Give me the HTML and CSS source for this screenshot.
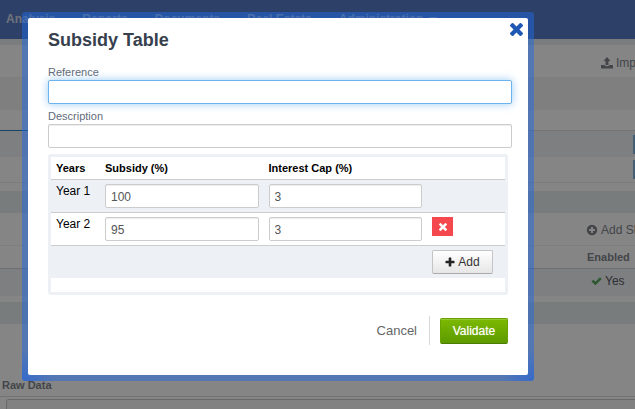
FILE: index.html
```html
<!DOCTYPE html>
<html lang="en">
<head>
    <meta charset="UTF-8">
    <meta name="viewport" content="width=device-width, initial-scale=1.0">
    <title>Subsidy Table</title>
    <link rel="stylesheet" href="styles.css">
</head>
<body>

    <div class="page">
        <nav class="navbar">
            <a href="#">Analysis</a>
            <a href="#">Reports</a>
            <a href="#">Documents</a>
            <a href="#">Real Estate</a>
            <a href="#">Administration <span class="caret"></span></a>
        </nav>

        <div class="toolbar">
            <a href="#" class="tool tool-import">
                <svg class="icon" viewBox="0 0 12 12"><path d="M6 0 9.500 4H7.500V8H4.500V4H2.500zM0 8H3.500Q4 9.200 6 9.200T8.500 8H12V11.500H0z"/></svg>
                Imp
            </a>
        </div>
        <div class="band band-filter"></div>
        <div class="tabs"><span class="tab-active"></span></div>
        <div class="row shaded"><button type="button" class="row-btn" aria-label="Edit"></button></div>
        <div class="row"><button type="button" class="row-btn" aria-label="Edit"></button></div>

        <div class="band"></div>
        <div class="actions">
            <a href="#" class="tool tool-add">
                <svg class="icon" viewBox="0 0 12 12"><path fill-rule="evenodd" d="M6 0.800A5.200 5.200 0 1 1 6 11.200 5.200 5.200 0 1 1 6 0.800zM5 3V5H3V7H5V9H7V7H9V5H7V3z"/></svg>
                Add Sh
            </a>
        </div>
        <div class="list-head"><span class="enabled">Enabled</span></div>
        <div class="list-row shaded">
            <span class="enabled enabled-yes">
                <svg class="icon check" viewBox="0 0 12 12"><path d="M0.500 6.500 2.500 4.500 4.800 6.700 9.700 1.800 11.700 3.800 4.800 10.700z"/></svg>
                Yes
            </span>
        </div>

        <div class="band"></div>
        <div class="raw">
            <label class="raw-title" for="raw">Raw Data</label>
            <textarea id="raw" class="raw-text"></textarea>
        </div>
    </div>

    <div class="backdrop">
        <div class="modal-frame">
            <form class="modal" role="dialog" aria-labelledby="title">
                <button type="button" class="close" aria-label="Close">
                    <svg viewBox="110 366 1188 1188"><path d="M1298 1322q0 40-28 68l-136 136q-28 28-68 28t-68-28l-294-294-294 294q-28 28-68 28t-68-28l-136-136q-28-28-28-68t28-68l294-294-294-294q-28-28-28-68t28-68l136-136q28-28 68-28t68 28l294 294 294-294q28-28 68-28t68 28l136 136q28 28 28 68t-28 68l-294 294 294 294q28 28 28 68z"/></svg>
                </button>
                <h1 id="title">Subsidy Table</h1>

                <label class="label" for="reference">Reference</label>
                <input type="text" id="reference" class="field" autofocus>
                <label class="label" for="description">Description</label>
                <input type="text" id="description" class="field">

                <div class="table-box">
                    <table>
                        <thead>
                            <tr>
                                <th class="col-year">Years</th>
                                <th>Subsidy (%)</th>
                                <th>Interest Cap (%)</th>
                                <th class="col-action"></th>
                            </tr>
                        </thead>
                        <tbody>
                            <tr>
                                <td>Year 1</td>
                                <td><input type="text" class="field" value="100" aria-label="Year 1 subsidy"></td>
                                <td><input type="text" class="field" value="3" aria-label="Year 1 interest cap"></td>
                                <td></td>
                            </tr>
                            <tr>
                                <td>Year 2</td>
                                <td><input type="text" class="field" value="95" aria-label="Year 2 subsidy"></td>
                                <td><input type="text" class="field" value="3" aria-label="Year 2 interest cap"></td>
                                <td>
                                    <button type="button" class="remove" aria-label="Remove">
                                        <svg viewBox="110 366 1188 1188"><path d="M1298 1322q0 40-28 68l-136 136q-28 28-68 28t-68-28l-294-294-294 294q-28 28-68 28t-68-28l-136-136q-28-28-28-68t28-68l294-294-294-294q-28-28-28-68t28-68l136-136q28-28 68-28t68 28l294 294 294-294q28-28 68-28t68 28l136 136q28 28 28 68t-28 68l-294 294 294 294q28 28 28 68z"/></svg>
                                    </button>
                                </td>
                            </tr>
                            <tr class="add-row">
                                <td colspan="3"></td>
                                <td>
                                    <button type="button" class="add">
                                        <svg viewBox="0 0 10 10"><path d="M4.300 0.500H5.700Q6.300 0.500 6.300 1.100V3.700H8.900Q9.500 3.700 9.500 4.300V5.700Q9.500 6.300 8.900 6.300H6.300V8.900Q6.300 9.500 5.700 9.500H4.300Q3.700 9.500 3.700 8.900V6.300H1.100Q0.500 6.300 0.500 5.700V4.300Q0.500 3.700 1.100 3.700H3.700V1.100Q3.700 0.500 4.300 0.500z"/></svg>
                                        Add
                                    </button>
                                </td>
                            </tr>
                        </tbody>
                    </table>
                </div>

                <div class="footer">
                    <button type="button" class="cancel">Cancel</button>
                    <span class="divider"></span>
                    <button type="submit" class="validate">Validate</button>
                </div>
            </form>
        </div>
    </div>

</body>
</html>
```
FILE: styles.css
```css
* {
    box-sizing: border-box;
}
body {
    margin: 0;
    height: 100vh;
    overflow: hidden;
    font-family: "Liberation Sans", Arial, sans-serif;
    font-size: 12px;
    line-height: 14px;
    color: #000;
}
button {
    font-family: inherit;
    font-size: 12px;
    line-height: 14px;
    padding: 0;
    border: 0;
    cursor: pointer;
}
a {
    color: inherit;
    text-decoration: none;
}

/* Page behind the dialog */
.page {
    display: flex;
    flex-direction: column;
    height: 100vh;
    background: #fff;
    color: #80858d;
    overflow: hidden;
}
.page > * {
    flex: none;
}
.navbar {
    display: flex;
    align-items: center;
    gap: 27px;
    height: 39px;
    padding: 0 6px 2px;
    background: #577dc8;
    color: #d5dceb;
    font-weight: bold;
    white-space: nowrap;
}
.caret {
    display: inline-block;
    margin-left: 2px;
    border: 4px solid transparent;
    border-top-color: #d5dceb;
    border-bottom: 0;
    vertical-align: middle;
}
.toolbar {
    display: flex;
    justify-content: flex-end;
    align-items: center;
    height: 38px;
    padding-top: 6px;
    border-top: 6px solid #eceef0;
}
.toolbar,
.actions {
    white-space: nowrap;
}
.tool {
    display: flex;
    align-items: center;
    gap: 3px;
}
.tool-import {
    width: 34px;
    padding-bottom: 3px;
}
.tool-add {
    width: 49px;
    padding-top: 2px;
}
.icon {
    flex: none;
    width: 12px;
    height: 12px;
    fill: #80858d;
}
.band {
    height: 22px;
    background: #e9edf0;
}
.band-filter {
    height: 33px;
    background: #f3f4f6;
}
.tabs {
    height: 21px;
    border-bottom: 1px solid #dcdcdc;
}
.tab-active {
    display: block;
    width: 28px;
    height: 21px;
    border-bottom: 1px solid #2b86c5;
}
.row {
    display: flex;
    justify-content: flex-end;
    align-items: center;
    height: 26px;
}
.shaded {
    background: #f1f4f7;
}
.row + .row {
    border-bottom: 1px solid #eee;
    margin-bottom: 8px;
}
.row-btn {
    width: 2px;
    height: 19px;
    background: #82b6e6;
}
.actions {
    display: flex;
    justify-content: flex-end;
    align-items: center;
    height: 33px;
    border-bottom: 1px solid #f1f1f1;
}
.list-head,
.list-row {
    display: flex;
    justify-content: flex-end;
    align-items: center;
    height: 23px;
    font-size: 11px;
}
.list-head {
    border-bottom: 1px solid #d5d5d5;
    font-weight: bold;
}
.list-row {
    height: 27px;
    margin-bottom: 6px;
}
.enabled {
    width: 48px;
}
.enabled-yes {
    display: flex;
    align-items: center;
    gap: 3px;
    padding-left: 4px;
    padding-bottom: 4px;
    font-size: 12px;
    color: #555b63;
}
.check {
    width: 11px;
    fill: #56a85f;
}
.page > .raw {
    display: flex;
    flex: 1;
    flex-direction: column;
    min-height: 0;
    padding-top: 54px;
}
.raw-title {
    height: 19px;
    padding-left: 2px;
    border-bottom: 1px solid #dcdcdc;
    font-size: 11px;
    font-weight: bold;
}
.raw-text {
    flex: 1;
    min-height: 0;
    margin: 2px 0 0 6px;
    border: 1px solid #c8c8c8;
    border-width: 1px 0 0 1px;
    border-radius: 3px 0 0 0;
    background: #f8f8f8;
    resize: none;
}

/* Dialog */
.backdrop {
    position: fixed;
    inset: 0;
    padding: 12px 101px 0 22px;
    background: rgba(0, 0, 0, 0.48);
}
.modal-frame {
    padding: 6px;
    border-radius: 3px;
    background:
        radial-gradient(circle at 0 100%, rgba(20, 90, 230, 0.45), transparent 32px),
        radial-gradient(circle at 100% 100%, rgba(20, 90, 230, 0.45), transparent 32px),
        rgba(31, 105, 225, 0.5);
}
.modal {
    position: relative;
    padding: 10px 16px 30px 20px;
    border-radius: 2px;
    background: #fff;
}
.close {
    position: absolute;
    top: 5px;
    right: 5px;
    width: 13px;
    height: 13px;
    background: none;
}
.close svg {
    display: block;
    fill: #1f57b5;
}
h1 {
    margin: 0 0 13px;
    font-size: 18px;
    line-height: 24px;
    color: #37404d;
}
.label {
    display: block;
    margin-bottom: 1px;
    font-size: 11px;
    color: #5f6b7a;
}
.field {
    display: block;
    width: 100%;
    height: 24px;
    padding: 1px 5px 0;
    border: 1px solid #ccc;
    border-radius: 2px;
    background: #fff;
    box-shadow: inset 0 1px 1px rgba(0, 0, 0, 0.075);
    font-family: inherit;
    font-size: 12px;
    color: #555;
}
.label + .field {
    margin-bottom: 5px;
}
.field:focus,
#reference {
    border-color: #6db3f2;
    outline: 0;
    box-shadow: 0 0 8px rgba(82, 168, 236, 0.6);
    caret-color: transparent;
}
.table-box {
    margin: 6px 4px 0 0;
    padding-bottom: 14px;
    border: 3px solid #edf1f6;
    border-radius: 3px;
}
table {
    width: 100%;
    table-layout: fixed;
    border-collapse: separate;
    border-spacing: 0;
}
th,
td {
    padding: 4px 5px;
    border-bottom: 1px solid #ccc;
    text-align: left;
    vertical-align: top;
}
th {
    font-size: 11px;
}
.col-year {
    width: 49px;
}
.col-action {
    width: 78px;
}
tbody tr:nth-child(odd) {
    background: #edf1f6;
}
.add-row td {
    border-bottom: 0;
}
.remove {
    display: flex;
    align-items: center;
    justify-content: center;
    width: 21px;
    height: 19px;
    background: #f4474e;
}
.remove svg {
    width: 8px;
    height: 8px;
    fill: #fff;
}
.add {
    display: flex;
    align-items: center;
    justify-content: center;
    gap: 3px;
    width: 61px;
    height: 24px;
    border: 1px solid #c4c4c4;
    border-bottom-color: #aaa;
    border-radius: 2px;
    background: linear-gradient(#fff, #e6e6e6);
    color: #333;
}
.add svg {
    width: 10px;
    height: 10px;
    fill: #222;
}
.footer {
    display: flex;
    justify-content: flex-end;
    align-items: center;
    margin: 21px 4px 0 0;
}
.cancel {
    background: none;
    font-size: 13px;
    color: #666;
}
.divider {
    width: 1px;
    height: 29px;
    margin: 0 10px 0 12px;
    background: #d8d8d8;
}
.validate {
    width: 68px;
    height: 26px;
    border: 1px solid #68a300;
    border-bottom-color: #4a7d00;
    border-radius: 2px;
    background: linear-gradient(#7cb900, #5c9a00);
    box-shadow: inset 0 1px 0 rgba(255, 255, 255, 0.2);
    color: #fff;
    text-shadow: 0 0 1px rgba(255, 255, 255, 0.6);
}
```
